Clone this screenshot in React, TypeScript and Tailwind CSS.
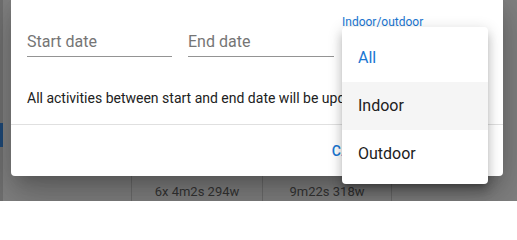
import React from "react";

const font = { fontFamily: "Roboto, 'Noto Sans', sans-serif" };

function PageBehind() {
  // page content under the modal backdrop (colours already dimmed)
  return (
    <div className="flex h-full w-full bg-[#838383]">
      <div className="flex w-[3px] flex-col bg-[#727272]">
        <div className="h-[123px]" />
        <div className="h-[24px] bg-[#1f4a78]" />
      </div>
      <div className="flex flex-1 flex-col">
        <div className="h-[166px]" />
        <div className="grid flex-1 grid-cols-[129px_131px_129px_1fr] text-[13px] leading-[19px] text-[#353535]">
          <div className="border-r border-[#6f6f6f]" />
          <div className="flex flex-col items-center border-r border-[#6f6f6f]">
            <span>Load 103</span>
            <span className="mt-[2px]">6x&nbsp;4m2s 294w</span>
          </div>
          <div className="flex flex-col items-center border-r border-[#6f6f6f]">
            <span>Load 104</span>
            <span className="mt-[2px]">9m22s 318w</span>
          </div>
          <div />
        </div>
      </div>
    </div>
  );
}

function Field({ label, placeholder, width }: { label?: string; placeholder?: string; width: string }) {
  return (
    <div className={`relative flex flex-col ${width}`}>
      {label ? (
        <span className="absolute left-0 top-[2px] text-[12px] leading-[14px] text-[#1976d2]">{label}</span>
      ) : null}
      <div className="mt-[19px] h-[25px] border-b border-[#949494] text-[16px] leading-[19px] text-[#757575]">
        {placeholder}
      </div>
    </div>
  );
}

function UpdateDialog() {
  return (
    <div className="absolute left-[11px] top-[-8px] flex h-[184px] w-[492px] flex-col rounded-[4px] bg-white shadow-[0_11px_15px_-7px_rgba(0,0,0,0.2),0_24px_38px_3px_rgba(0,0,0,0.14),0_9px_46px_8px_rgba(0,0,0,0.12)]">
      <div className="flex gap-[16px] pl-[16px] pt-[21px]">
        <Field placeholder="Start date" width="w-[145px]" />
        <Field placeholder="End date" width="w-[146px]" />
        <Field label="Indoor/outdoor" width="ml-[-8px] w-[146px]" />
      </div>
      <p className="mt-[31px] whitespace-nowrap pl-[16px] text-[14px] leading-[20px] text-[#212121]">
        All activities between start and end date will be updated.
      </p>
      <div className="mt-[16px] border-t border-[#e0e0e0]" />
      <div className="flex flex-1 items-center justify-end gap-[8px] pr-[8px]">
        <button className="px-[8px] py-[6px] text-[14px] font-medium uppercase leading-[16px] tracking-[0.4px] text-[#1976d2]">
          Cancel
        </button>
        <button className="min-w-[92px] px-[8px] py-[6px] text-[14px] font-medium uppercase leading-[16px] tracking-[0.4px] text-[#1976d2]">
          Update
        </button>
      </div>
    </div>
  );
}

function SelectMenu() {
  const items = ["All", "Indoor", "Outdoor"];
  return (
    <ul className="absolute left-[342px] top-[27px] flex w-[146px] flex-col rounded-[4px] bg-white pb-[6px] pt-[7px] shadow-[0_5px_5px_-3px_rgba(0,0,0,0.2),0_8px_10px_1px_rgba(0,0,0,0.14),0_3px_14px_2px_rgba(0,0,0,0.12)]">
      {items.map((item, i) => (
        <li
          key={item}
          className={`flex h-[48px] items-center pl-[16px] text-[16px] leading-[24px] ${
            i === 0 ? "text-[#1976d2]" : "text-[#212121]"
          } ${i === 1 ? "bg-[#f5f5f5]" : ""}`}
        >
          {item}
        </li>
      ))}
    </ul>
  );
}

export default function App() {
  return (
    <div className="relative h-[201px] w-[517px] overflow-hidden" style={font}>
      <PageBehind />
      <UpdateDialog />
      <SelectMenu />
    </div>
  );
}
